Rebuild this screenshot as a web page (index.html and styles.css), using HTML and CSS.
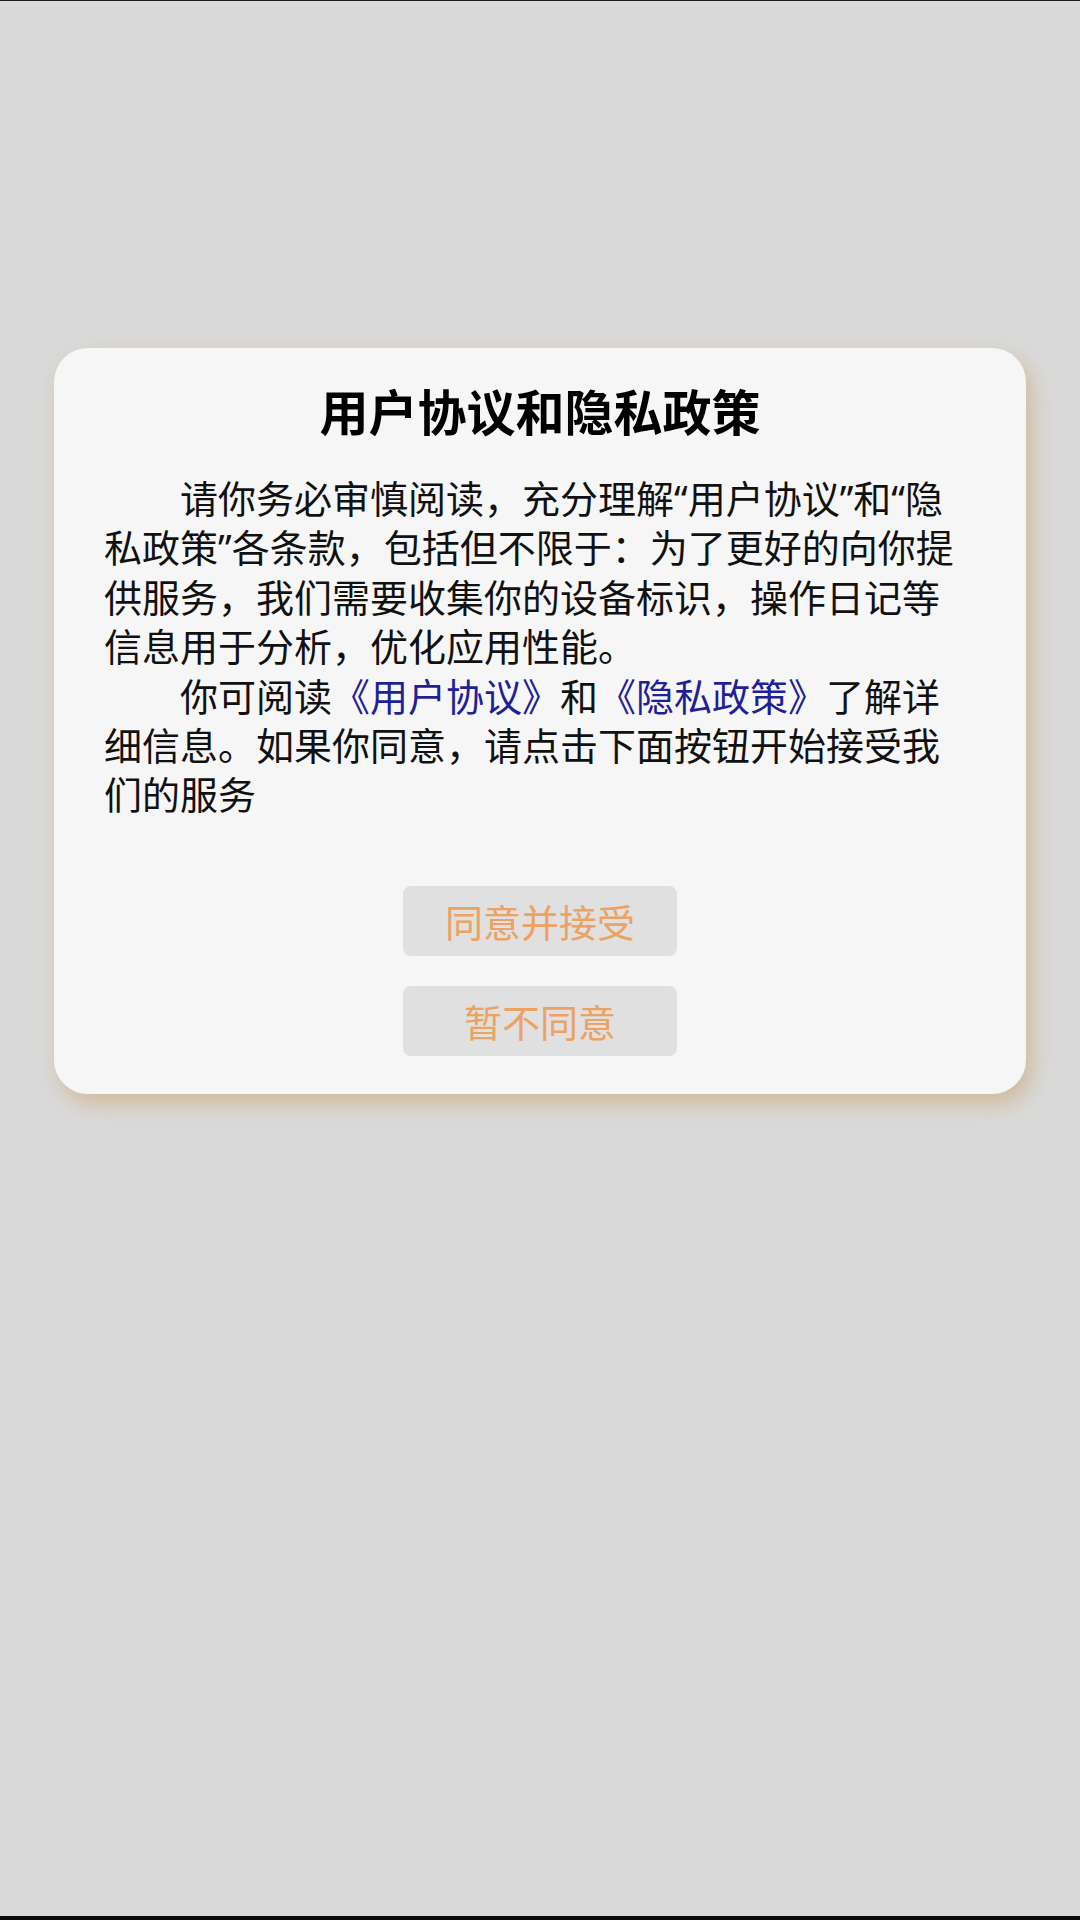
FILE: index.html
```html
<!DOCTYPE html>
<html lang="zh-CN">
<head>
    <meta charset="UTF-8">
    <meta name="viewport" content="width=device-width, initial-scale=1.0">
    <title>用户协议和隐私政策</title>
    <link rel="stylesheet" href="styles.css">
</head>
<body>
    <div class="screen">
        <!-- Privacy dialog -->
        <div class="dialog">
            <h1>用户协议和隐私政策</h1>
            <p class="para">请你务必审慎阅读，充分理解<span class="q">“</span>用户协议<span class="q">”</span>和<span class="q">“</span>隐私政策<span class="q">”</span>各条款，包括但不限于：为了更好的向你提供服务，我们需要收集你的设备标识，操作日记等信息用于分析，优化应用性能。</p>
            <p class="para">你可阅读<a href="#" class="link">《用户协议》</a>和<a href="#" class="link">《隐私政策》</a>了解详细信息。如果你同意，请点击下面按钮开始接受我们的服务</p>
            <div class="actions">
                <button class="btn">同意并接受</button>
                <button class="btn">暂不同意</button>
            </div>
        </div>
    </div>
</body>
</html>
```

FILE: styles.css
```css
body {
    margin: 0;
    background: #dadada;
    font-family: "Noto Sans CJK SC", "Noto Sans", sans-serif;
    color: #111111;
}
.screen {
    height: 1920px;
    box-sizing: border-box;
    border-top: 1px solid #1c1c1c;
    border-bottom: 4px solid #0a0a0a;
    padding-top: 347px;
}
.dialog {
    margin: 0 54px;
    background: #f6f6f6;
    border-radius: 34px;
    box-shadow: 6px 10px 22px rgba(200, 165, 115, 0.6);
    padding: 30px 50px 38px;
}
.dialog h1 {
    margin: 0 0 30px;
    text-align: center;
    font-size: 49px;
    line-height: 64px;
    font-weight: bold;
    color: #000000;
}
.para {
    margin: 0;
    font-size: 38px;
    line-height: 49.4px;
    text-indent: 2em;
}
/* western quotes, narrower than the CJK ones */
.q {
    font-family: "Noto Sans", sans-serif;
    line-height: 0;
}
.link {
    color: #1f1f96;
    text-decoration: none;
}
.actions {
    display: flex;
    flex-direction: column;
    align-items: center;
    gap: 30px;
    margin-top: 68px;
}
.btn {
    width: 274px;
    height: 70px;
    border: none;
    border-radius: 8px;
    background: #e0e0e0;
    color: #eba262;
    font-family: inherit;
    font-size: 38px;
    padding: 0;
}
```
